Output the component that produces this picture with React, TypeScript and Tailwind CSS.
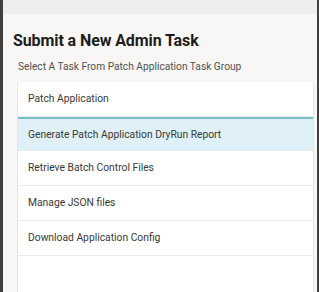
const tasks = [
  "Patch Application",
  "Generate Patch Application DryRun Report",
  "Retrieve Batch Control Files",
  "Manage JSON files",
  "Download Application Config",
];

const selectedIndex = 1;

export default function App() {
  return (
    <div
      className="flex h-[292px] w-[319px] flex-col overflow-hidden border-l-[3px] border-r-2 border-[#3f3f3f] bg-[#f8f7f5]"
      style={{ fontFamily: "Roboto, 'Noto Sans', sans-serif" }}
    >
      <div className="h-[14px] shrink-0 bg-[#efeeec]" />

      <h1 className="mt-[16px] pl-[10px] text-[16px] font-bold leading-[22px] tracking-[-0.1px] text-[#1d1d1d]">
        Submit a New Admin Task
      </h1>
      <p className="mt-[8px] pl-[15px] text-[10.2px] leading-[14px] text-[#505050]">
        Select A Task From Patch Application Task Group
      </p>

      <div className="mr-[3px] ml-[14px] mt-[8px] flex-1 border-l border-r border-[#e6e6e6] bg-white">
        {tasks.map((task, i) => (
          <div
            key={task}
            className={
              i === selectedIndex
                ? "flex h-[34px] items-center border-t-2 border-b border-t-[#7bbcc8] border-b-[#e4eef2] bg-[#dff0f8] px-[10px] text-[10.3px] text-[#383838]"
                : "flex h-[35px] items-center border-b border-[#ececec] px-[10px] text-[10.3px] text-[#383838]"
            }
          >
            {task}
          </div>
        ))}
      </div>
    </div>
  );
}
